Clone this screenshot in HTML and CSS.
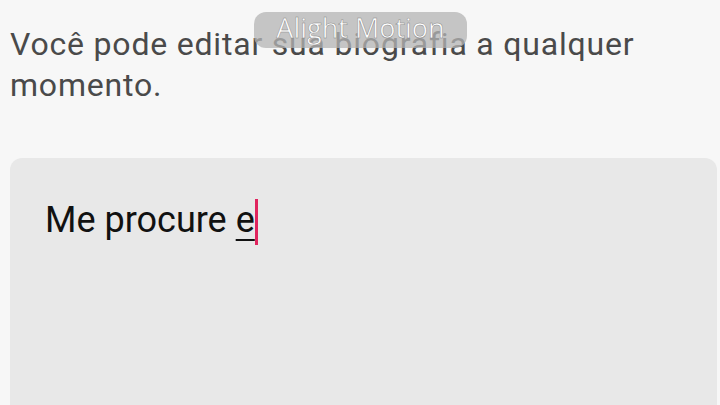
FILE: index.html
```html
<!DOCTYPE html>
<html lang="pt">

<head>
    <meta charset="UTF-8">
    <meta name="viewport" content="width=device-width, initial-scale=1.0">
    <title>Biografia</title>
    <link rel="stylesheet" href="styles.css">
</head>

<body>

    <div class="screen">
        <p class="hint">Você pode editar sua biografia a qualquer momento.</p>

        <!-- Bio input -->
        <div class="bio-box">
            <span class="bio-text">Me procure <span class="composing">e</span><span class="caret"></span></span>
        </div>
    </div>

    <div class="watermark">Alight Motion</div>

</body>

</html>
```

FILE: styles.css
```css
/* Basic styling */
body {
    margin: 0;
    background: #f7f7f7;
    font-family: Roboto, "Liberation Sans", sans-serif;
    overflow: hidden;
    height: 405px;
}

.screen {
    display: flex;
    flex-direction: column;
    padding: 24px 3px 0 10px;
}

.hint {
    margin: 0;
    width: 660px;
    font-size: 32px;
    line-height: 41px;
    letter-spacing: 0.8px;
    color: #4a4a4a;
}

.bio-box {
    margin-top: 52px;
    height: 260px;
    padding: 37px 35px;
    background: #e8e8e8;
    border-radius: 12px 12px 0 0;
}

.bio-text {
    font-size: 36px;
    color: #111;
    display: inline-flex;
    align-items: center;
}

.composing {
    text-decoration: underline;
    text-underline-offset: 7px;
    text-decoration-thickness: 2px;
    margin-left: 9px;
}

.caret {
    display: inline-block;
    width: 3px;
    height: 46px;
    margin-top: 4px;
    background: #e0245e;
}

.watermark {
    position: absolute;
    top: 12px;
    left: 254px;
    width: 213px;
    height: 36px;
    border-radius: 12px;
    background: rgba(180, 180, 180, 0.75);
    color: #fff;
    font-family: "Open Sans", sans-serif;
    font-size: 27px;
    line-height: 32px;
    text-align: center;
    -webkit-text-stroke: 0.5px #888;
}
```
